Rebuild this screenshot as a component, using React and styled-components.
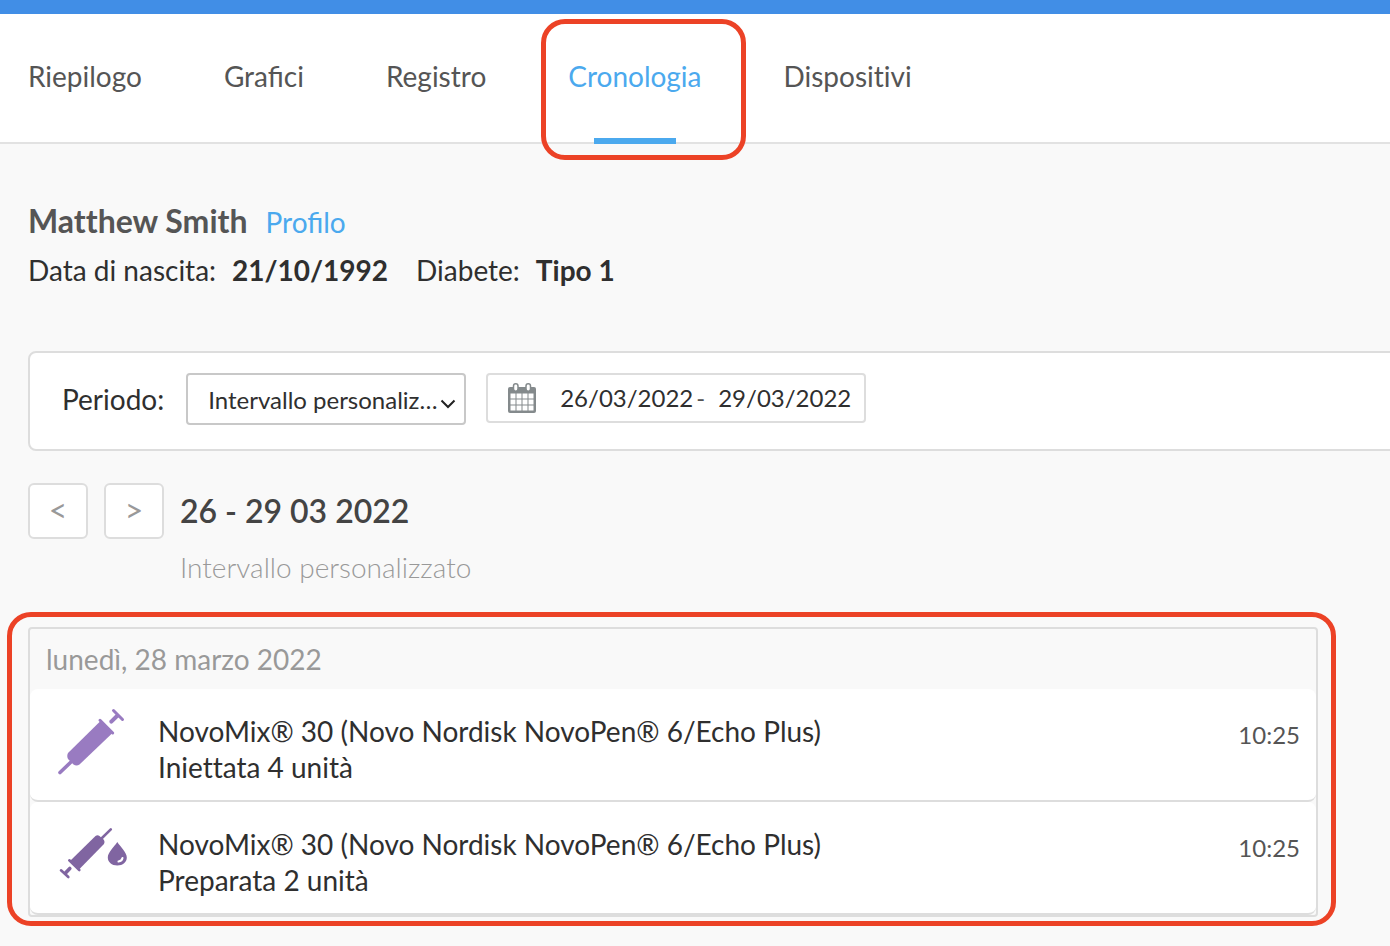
import React, { useState } from 'react';
import styled, { createGlobalStyle } from 'styled-components';

const tabs = ['Riepilogo', 'Grafici', 'Registro', 'Cronologia', 'Dispositivi'];

const events = [
  {
    icon: 'injected',
    drug: 'NovoMix® 30 (Novo Nordisk NovoPen® 6/Echo Plus)',
    detail: 'Iniettata 4 unità',
    time: '10:25',
  },
  {
    icon: 'primed',
    drug: 'NovoMix® 30 (Novo Nordisk NovoPen® 6/Echo Plus)',
    detail: 'Preparata 2 unità',
    time: '10:25',
  },
];

export default function App() {
  const [from, setFrom] = useState('26/03/2022');
  const [to, setTo] = useState('29/03/2022');

  return (
    <>
      <GlobalStyle />
      <TopBar />
      <Nav>
        {tabs.map((tab) => (
          <Tab key={tab} href="#" $active={tab === 'Cronologia'} $ligatures={tab.includes('fi')}>
            {tab}
            {tab === 'Cronologia' && <TabCallout />}
          </Tab>
        ))}
      </Nav>
      <Main>
        <Patient>
          <Name>Matthew Smith</Name>
          <ProfileLink href="#">Profilo</ProfileLink>
        </Patient>
        <Facts>
          <Fact>
            <dt>Data di nascita:</dt>
            <dd>21/10/1992</dd>
          </Fact>
          <Fact>
            <dt>Diabete:</dt>
            <dd>Tipo 1</dd>
          </Fact>
        </Facts>

        <Filter>
          <Label htmlFor="period">Periodo:</Label>
          <SelectBox>
            <Select id="period">
              <option>Intervallo personalizzato</option>
            </Select>
            <Chevron viewBox="0 0 16 10">
              <path d="M1.5 1.5 8 8l6.500-6.500" />
            </Chevron>
          </SelectBox>
          <DateRange>
            <CalendarIcon />
            <DateInput aria-label="Dal" value={from} onChange={(e) => setFrom(e.target.value)} />
            <Dash>-</Dash>
            <DateInput aria-label="Al" value={to} onChange={(e) => setTo(e.target.value)} />
          </DateRange>
        </Filter>

        <Period>
          <StepButton type="button">&lt;</StepButton>
          <StepButton type="button">&gt;</StepButton>
          <PeriodTitle>26 - 29 03 2022</PeriodTitle>
        </Period>
        <PeriodNote>Intervallo personalizzato</PeriodNote>

        <Timeline>
          <Day>lunedì, 28 marzo 2022</Day>
          {events.map((event) => (
            <Row key={event.detail}>
              {event.icon === 'injected' ? <SyringeIcon /> : <PrimeIcon />}
              <RowText>
                {event.drug}
                <br />
                {event.detail}
              </RowText>
              <Time>{event.time}</Time>
            </Row>
          ))}
          <TimelineCallout />
        </Timeline>
      </Main>
    </>
  );
}

function CalendarIcon() {
  return (
    <Calendar viewBox="0 0 28 30">
      <path
        fill="#848a8c"
        d="M2 4h24a2 2 0 0 1 2 2v22a2 2 0 0 1-2 2H2a2 2 0 0 1-2-2V6a2 2 0 0 1 2-2z"
      />
      <path
        fill="#fff"
        d="M2.500 10.500h5v5h-5zM8.500 10.500h5v5h-5zM14.500 10.500h5v5h-5zM20.500 10.500h5v5h-5zM2.500 16.500h5v5h-5zM8.500 16.500h5v5h-5zM14.500 16.500h5v5h-5zM20.500 16.500h5v5h-5zM2.500 22.500h5v5h-5zM8.500 22.500h5v5h-5zM14.500 22.500h5v5h-5zM20.500 22.500h5v5h-5z"
      />
      <rect x="5.500" y="0.800" width="4.500" height="7.500" rx="2.200" fill="#fff" stroke="#848a8c" strokeWidth="1.500" />
      <rect x="18" y="0.800" width="4.500" height="7.500" rx="2.200" fill="#fff" stroke="#848a8c" strokeWidth="1.500" />
    </Calendar>
  );
}

function SyringeIcon() {
  return (
    <RowIcon viewBox="0 0 100 90" $color="#997bc1">
      <path className="line" strokeWidth="3.600" d="M20 72.500 31 62" />
      <path d="M60.500 21 72.500 33 39.500 64.500q-3 2-6 0l-5.500-5.500q-1.500-3 0-6z" />
      <path className="line" strokeWidth="3" d="M60 20.300 72.700 33" />
      <path className="line" strokeWidth="4" d="M71.300 21.700 77 16" />
      <path className="line" strokeWidth="3" d="M73.500 10.500 82.500 19.500" />
    </RowIcon>
  );
}

function PrimeIcon() {
  return (
    <RowIcon viewBox="0 -2 100 90" $color="#8065a1">
      <path className="line" strokeWidth="2.600" d="M70.800 14.300 62 23" />
      <path d="M30 46 55.500 21q2-1.500 4 0l4 3.500q2 2.500 0 5L39 54.500z" />
      <path className="line" strokeWidth="2.600" d="M29.300 45.300 39.300 55" />
      <path className="line" strokeWidth="3.600" d="M29.800 53.500 25.500 58" />
      <path className="line" strokeWidth="2.600" d="M21 55.300 28.300 62" />
      <path d="M77.300 27C74 32 67.800 37.500 67.800 42.500c0 4.500 4 8 9.500 8s9.500-3.500 9.500-8c0-5-6.200-10.500-9.500-15.500z" />
      <path d="M78.500 46.500q3.500-.5 4-3.500" fill="none" stroke="#fff" strokeWidth="2" strokeLinecap="round" />
    </RowIcon>
  );
}

const GlobalStyle = createGlobalStyle`
  * {
    box-sizing: border-box;
  }

  body {
    margin: 0;
    background: #f9f9f9;
    color: #2f2f2f;
    font-family: Lato, sans-serif;
    font-size: 28px;
    font-variant-ligatures: none;
    line-height: 36px;
    overflow-x: hidden;
  }

  button, input, select {
    font-family: inherit;
  }
`;

const TopBar = styled.div`
  height: 14px;
  background: #418ee6;
`;

const Nav = styled.nav`
  display: flex;
  gap: 82px;
  height: 130px;
  padding: 0 28px;
  background: #fff;
  border-bottom: 2px solid #e2e2e2;
`;

const Tab = styled.a`
  position: relative;
  line-height: 124px;
  color: ${({ $active }) => ($active ? '#4ba9ee' : '#555')};
  font-variant-ligatures: ${({ $ligatures }) => ($ligatures ? 'normal' : 'none')};
  text-decoration: none;

  &::after {
    content: '';
    display: ${({ $active }) => ($active ? 'block' : 'none')};
    position: absolute;
    bottom: -2px;
    left: 50%;
    width: 82px;
    height: 6px;
    margin-left: -41px;
    background: #4ba9ee;
  }
`;

const Callout = styled.span`
  position: absolute;
  border: 5px solid #ec4226;
  border-radius: 24px;
  pointer-events: none;
`;

const TabCallout = styled(Callout)`
  top: 5px;
  right: -44px;
  bottom: -18px;
  left: -27px;
`;

const TimelineCallout = styled(Callout)`
  top: -17px;
  right: -20px;
  bottom: -11px;
  left: -23px;
`;

const Main = styled.main`
  padding: 59px 0 29px 28px;
`;

const Patient = styled.div`
  display: flex;
  align-items: baseline;
  gap: 18px;
`;

const Name = styled.h1`
  margin: 0;
  font-size: 32px;
  font-weight: 700;
  color: #555;
`;

const ProfileLink = styled.a`
  color: #4ba9ee;
  font-variant-ligatures: normal;
  text-decoration: none;
`;

const Facts = styled.dl`
  display: flex;
  gap: 28px;
  margin: 12px 0 0;
`;

const Fact = styled.div`
  display: flex;
  gap: 16px;

  dd {
    margin: 0;
    font-weight: 700;
  }
`;

const Filter = styled.form`
  display: flex;
  align-items: flex-start;
  gap: 20px;
  height: 100px;
  margin: 63px -8px 0 0;
  padding: 20px 32px;
  background: #fff;
  border: 2px solid #ddd;
  border-radius: 8px;
`;

const Label = styled.label`
  margin-right: 2px;
  line-height: 52px;
`;

const SelectBox = styled.div`
  position: relative;
  width: 280px;
`;

const Select = styled.select`
  display: block;
  width: 100%;
  height: 52px;
  padding: 0 18px 0 20px;
  appearance: none;
  background: #fff;
  border: 2px solid #c8c8c8;
  border-radius: 4px;
  color: #2f2f2f;
  font-size: 24px;
  text-overflow: ellipsis;
`;

const Chevron = styled.svg`
  position: absolute;
  top: 26px;
  right: 10px;
  width: 16px;
  height: 10px;
  fill: none;
  stroke: #222;
  stroke-width: 2;
  pointer-events: none;
`;

const DateRange = styled.div`
  display: flex;
  align-items: center;
  width: 380px;
  height: 50px;
  padding: 0 8px 0 20px;
  background: #fff;
  border: 2px solid #ddd;
  border-radius: 4px;
`;

const Calendar = styled.svg`
  flex: none;
  width: 28px;
  height: 30px;
  margin-right: 24px;
`;

const DateInput = styled.input`
  width: 134px;
  padding: 0 0 2px;
  border: 0;
  background: none;
  color: #2f2f2f;
  font-size: 24px;
`;

const Dash = styled.span`
  width: 24px;
  padding-left: 2px;
  font-size: 24px;
  color: #555;
`;

const Period = styled.div`
  display: flex;
  align-items: center;
  gap: 16px;
  margin-top: 32px;
`;

const StepButton = styled.button`
  width: 60px;
  height: 56px;
  padding: 0 0 4px;
  background: #fff;
  border: 2px solid #ddd;
  border-radius: 6px;
  color: #999;
  font-size: 32px;
`;

const PeriodTitle = styled.h2`
  margin: 0;
  font-size: 32px;
  font-weight: 600;
  color: #444;
`;

const PeriodNote = styled.p`
  margin: 10px 0 0 152px;
  font-weight: 300;
  color: #999;
`;

const Timeline = styled.section`
  position: relative;
  margin: 42px 72px 0 0;
  border: 2px solid #ddd;
  border-radius: 4px;
`;

const Day = styled.h3`
  margin: 0;
  padding: 0 16px;
  font-size: 28px;
  font-weight: 400;
  line-height: 60px;
  color: #999;
`;

const Row = styled.article`
  display: flex;
  height: 113px;
  padding: 0 16px 0 10px;
  background: #fff;
  border-bottom: 2px solid #ddd;
  border-radius: 8px;
`;

const RowIcon = styled.svg`
  flex: none;
  width: 100px;
  height: 90px;
  margin-top: 11px;
  fill: ${({ $color }) => $color};

  .line {
    fill: none;
    stroke: ${({ $color }) => $color};
    stroke-linecap: round;
  }
`;

const RowText = styled.p`
  flex: 1;
  margin: 24px 0 0 18px;
`;

const Time = styled.time`
  margin-top: 28px;
  font-size: 24px;
  color: #555;
`;
